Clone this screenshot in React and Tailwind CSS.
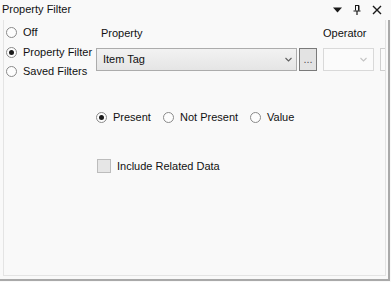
import React from 'react'

const FONT = { fontFamily: '"Liberation Sans", Arial, sans-serif' }

function Radio({ checked, label, className = '' }) {
  return (
    <div className={`flex items-center gap-[6px] ${className}`}>
      <span className="w-[11px] h-[11px] rounded-full border border-[#8a8a8a] bg-[#fdfdfd] flex items-center justify-center shrink-0">
        {checked && <span className="w-[5px] h-[5px] rounded-full bg-[#1a1a1a]" />}
      </span>
      <span className="leading-none">{label}</span>
    </div>
  )
}

function Chevron({ color = '#606060' }) {
  return (
    <svg width="7" height="5" viewBox="0 0 7 5" aria-hidden>
      <path d="M0.5 1l3 3 3-3" fill="none" stroke={color} strokeWidth="1.1" />
    </svg>
  )
}

export default function App() {
  return (
    <div className="w-[391px] h-[282px] bg-[#f9f9f9] text-[11px] text-[#111] flex flex-col overflow-hidden" style={FONT}>
      {/* title bar */}
      <div className="h-[20px] flex items-center justify-between pl-[2px] pr-[9px] shrink-0">
        <span className="leading-none -mt-[2px]">Property Filter</span>
        <div className="flex items-center gap-[11px]">
          <svg width="9" height="6" viewBox="0 0 9 6" aria-hidden>
            <path d="M0 0.5h9L4.5 5.5z" fill="#1a1a1a" />
          </svg>
          <svg width="8" height="10" viewBox="0 0 8 10" aria-hidden>
            <path d="M2 0.5h4M2.5 0.5v5M5.5 0.5v5" stroke="#1a1a1a" strokeWidth="1" fill="none" />
            <path d="M5 0.5h1.5v5H5z" fill="#1a1a1a" />
            <path d="M0.5 6h7M4 6v4" stroke="#1a1a1a" strokeWidth="1.2" fill="none" />
          </svg>
          <svg width="10" height="10" viewBox="0 0 10 10" aria-hidden>
            <path d="M1 1l8 8M9 1l-8 8" stroke="#1a1a1a" strokeWidth="1.4" />
          </svg>
        </div>
      </div>

      {/* frame */}
      <div className="flex-1 border-r-2 border-b-2 border-[#a9a9a9] mr-[1px] mb-[1px] flex">
        <div className="flex-1 ml-[3px] mr-[2px] mb-[3px] border-l border-r border-b border-[#e4e4e4] flex overflow-hidden">
          {/* left radios */}
          <div className="w-[92px] pl-[2px] pt-[2px] shrink-0 flex flex-col">
            <Radio label="Off" className="h-[20px]" />
            <Radio checked label="Property Filter" className="h-[20px]" />
            <Radio label="Saved Filters" className="h-[19px]" />
          </div>

          {/* right content */}
          <div className="flex-1 flex flex-col">
            <div className="h-[16px] mt-[5px] flex items-center">
              <span className="w-[226px] pl-[5px] shrink-0">Property</span>
              <span className="pl-[1px]">Operator</span>
            </div>
            <div className="h-[23px] mt-[7px] flex items-stretch shrink-0">
              <div className="w-[201px] shrink-0 border border-[#acacac] bg-gradient-to-b from-[#f2f2f2] to-[#e5e5e5] flex items-center justify-between pl-[6px] pr-[4px]">
                <span>Item Tag</span>
                <Chevron />
              </div>
              <div className="w-[18px] ml-[2px] shrink-0 border border-[#7a7a7a] bg-[#e3e3e3] flex items-end justify-center pb-[5px] text-[#555] leading-none">
                ...
              </div>
              <div className="w-[51px] ml-[6px] shrink-0 border border-[#d9d9d9] bg-[#fbfbfb] flex items-center justify-end pr-[6px]">
                <Chevron color="#c4c4c4" />
              </div>
              <div className="w-[20px] ml-[6px] shrink-0 border border-[#cfcfcf] bg-[#fbfbfb]" />
            </div>
            <div className="h-[16px] mt-[38px] flex items-center">
              <Radio checked label="Present" className="w-[67px]" />
              <Radio label="Not Present" className="w-[87px]" />
              <Radio label="Value" />
            </div>
            <div className="h-[14px] mt-[34px] flex items-center gap-[6px] pl-[1px]">
              <span className="w-[14px] h-[14px] border border-[#bcbcbc] bg-[#e6e6e6] shrink-0" />
              <span className="leading-none">Include Related Data</span>
            </div>
          </div>
        </div>
      </div>
    </div>
  )
}
